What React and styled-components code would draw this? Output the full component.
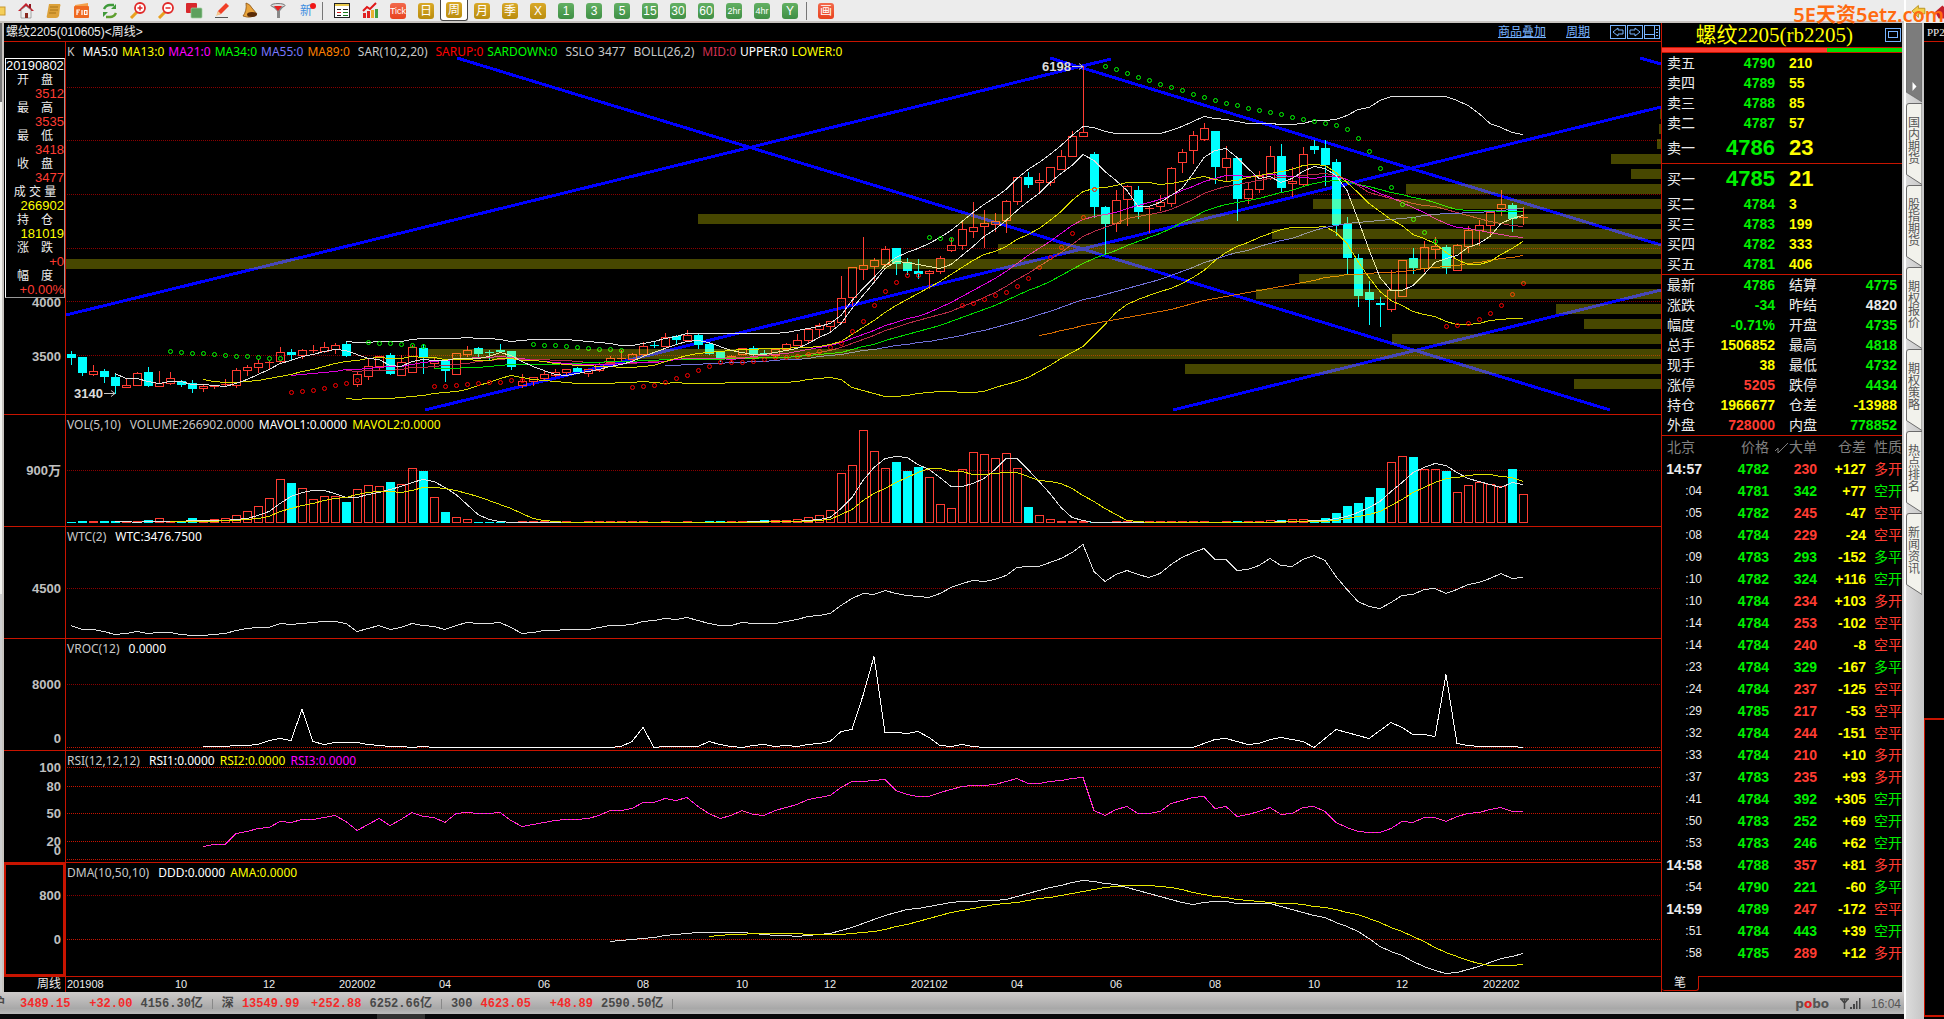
import React from 'react';
import styled, { createGlobalStyle, css } from 'styled-components';

const sans = '"Liberation Sans", "Noto Sans CJK SC", sans-serif';
const ui = '"Noto Sans", "Noto Sans CJK SC", sans-serif';
const mono = '"Liberation Mono", "Noto Sans CJK SC", monospace';
const c = {
  line: '#c81400',
  grid: '#8a0000',
  up: '#ff3c32',
  down: '#00ffff',
  green: '#00f000',
  yellow: '#ffff00',
  white: '#ececec',
  magenta: '#ff00ff',
  grey: '#c8c8c8',
};

const Global = createGlobalStyle`
  * { box-sizing: border-box; }
  body { margin: 0; background: #000; font-family: ${sans}; }
  button { font: inherit; padding: 0; margin: 0; border: 0; background: none; cursor: pointer; }
  table { border-collapse: collapse; border-spacing: 0; }
  td, th { padding: 0; font-weight: normal; text-align: left; }
  svg { display: block; }
`;

/* ---------- data ---------- */

// One entry per week: [falling?, high, body top, body bottom, low] on the price canvas.
const weeks = [
  [1,351,354,358,365],[1,357,357,373,376],[0,365,371,374,376],[1,369,371,377,383],[1,374,377,386,394],
  [0,378,385,387,387],[0,372,373,385,386],[1,367,372,386,387],[0,371,383,386,386],[0,372,378,383,385],
  [1,380,381,385,387],[1,380,383,389,393],[0,385,386,388,392],[0,385,386,386,389],[0,379,384,385,386],
  [0,368,370,385,388],[0,365,367,370,376],[0,359,363,367,373],[0,361,362,363,369],[0,347,352,361,363],
  [1,349,352,355,360],[0,349,350,355,359],[0,345,350,351,353],[0,342,347,351,353],[0,343,345,349,354],
  [1,341,344,356,357],[0,371,374,384,387],[0,359,366,376,380],[0,356,356,366,370],[1,353,355,374,375],
  [0,355,362,375,375],[0,345,347,372,372],[1,344,348,358,374],[0,357,360,363,368],[1,360,361,371,382],
  [0,353,353,374,375],[0,346,350,354,357],[1,347,348,354,357],[1,350,352,352,360],[1,344,350,352,352],
  [1,351,351,367,370],[0,374,381,385,388],[0,377,377,381,386],[0,370,374,378,380],[0,369,372,375,377],
  [0,369,369,372,376],[1,367,368,372,372],[0,369,369,373,377],[0,363,364,370,372],[0,356,358,362,364],
  [0,350,358,359,362],[0,353,354,359,361],[0,342,346,354,357],[1,342,345,345,348],[0,333,337,346,347],
  [1,335,336,340,344],[0,330,335,340,341],[1,334,335,345,349],[1,342,344,354,355],[1,352,352,358,362],
  [0,355,356,357,362],[0,348,348,354,355],[1,346,348,355,357],[1,350,353,354,356],[0,349,349,355,357],
  [0,343,344,349,350],[0,334,340,345,346],[0,329,329,340,343],[0,323,325,329,338],[0,321,321,326,331],
  [0,276,298,322,323],[0,267,267,297,306],[0,237,265,269,280],[0,258,260,266,282],[0,246,249,264,267],
  [1,248,248,264,275],[1,258,262,271,275],[1,259,271,274,279],[0,270,271,273,289],[0,256,258,271,274],
  [0,238,245,250,252],[0,221,229,245,250],[0,202,227,231,238],[0,210,223,226,248],[0,213,221,224,232],
  [0,200,201,220,233],[0,177,177,201,205],[1,172,177,185,188],[0,173,180,182,194],[0,167,167,182,186],
  [0,150,156,169,170],[0,131,136,156,157],[0,66,132,136,136],[1,152,154,207,218],[1,206,207,224,255],
  [0,190,200,223,232],[0,185,186,199,226],[1,186,190,212,219],[0,206,208,209,233],[0,195,202,206,211],
  [0,167,168,203,207],[0,149,152,162,173],[0,131,135,150,164],[0,123,128,139,141],[1,131,131,167,184],
  [0,146,158,167,182],[1,158,158,199,221],[0,182,189,198,204],[0,171,176,189,193],[0,146,156,178,180],
  [1,144,156,188,192],[0,167,181,183,197],[0,147,154,184,187],[1,140,146,150,154],[1,140,148,165,186],
  [1,159,162,225,236],[1,217,224,258,274],[1,254,258,296,307],[1,281,292,300,325],[1,297,303,305,327],
  [0,270,290,309,312],[0,260,260,296,297],[1,248,258,268,274],[0,241,247,268,272],[0,237,246,249,259],
  [1,245,247,268,274],[0,244,245,270,271],[0,226,230,246,253],[0,220,225,230,246],[0,212,212,225,236],
  [0,190,204,208,216],[1,203,205,219,232],[0,207,217,217,225],
];

const volumes = [
  1,2,1,2,2,1,1,3,4,1,2,5,2,3,4,7,11,16,24,43,40,34,23,26,26,21,33,37,36,41,38,54,52,25,11,5,3,1,1,1,
  1,1,1,1,1,1,1,1,1,1,1,1,1,1,1,1,1,1,2,2,1,1,2,3,2,2,3,5,7,12,49,57,92,71,54,61,52,56,45,18,14,53,70,
  68,64,69,54,16,7,3,1,1,1,1,1,1,1,1,1,1,1,1,1,1,1,1,2,1,1,2,3,3,3,2,5,10,17,20,26,35,60,66,66,53,53,52,
  30,37,40,38,36,54,28,
];

const sar = [
  ['up', 9, [351,352,353,353,354,355,356,356,357,358,358]],
  ['dn', 20, [392,391,390,388,385,383,380]],
  ['up', 27, [342,343,343,344,345,346]],
  ['dn', 33, [386,386,385,384,383,382,382,380,380]],
  ['up', 42, [344,345,345,346,347,348,349,349,350]],
  ['dn', 51, [387,386,385,382,378,375,370,366,362,362,362,361,359,357,357,356,354,351,347,343,331,321,305,291,282,275,275]],
  ['up', 78, [237,238,239]],
  ['dn', 81, [305,303,299,295,292,286,278,267,257,247,233,217,189]],
  ['up', 94, [66,69,73,77,80,84,87,90,94,97,100,103,105,108,110,112,114,117,119,121,123,125,129,138,151,168,187,204,219,232,241]],
  ['dn', 125, [326,325,323,319,313,305,294,283]],
];

const vroc = [
  746,746,746,745,745,744,740,738,740,709,741,744,742,742,742,744,745,746,746,747,746,747,747,747,747,747,
  747,747,747,747,747,747,747,747,747,747,747,747,746,741,727,747,746,746,746,746,741,744,746,747,745,744,
  746,745,746,744,743,741,731,729,695,656,732,732,733,731,737,745,746,744,746,747,747,747,747,747,747,747,
  747,747,747,747,747,747,747,747,747,747,747,747,747,743,739,738,741,744,743,739,737,739,741,747,738,729,
  732,735,738,730,722,727,734,734,736,674,743,745,746,746,746,746,747,
];

const rsi = [
  846,844,844,833,831,828,827,821,822,819,819,817,815,821,830,824,818,825,819,812,816,817,822,813,812,813,
  813,812,820,826,824,822,820,819,819,818,815,810,810,808,802,802,798,800,797,806,813,818,815,810,814,815,
  810,807,804,799,797,795,787,781,781,780,779,790,794,796,796,792,789,786,785,785,784,781,778,783,783,781,
  780,778,777,810,815,809,806,813,813,811,803,800,797,796,808,806,816,814,811,807,814,813,807,806,811,822,
  827,831,832,832,828,821,822,817,817,821,816,813,812,809,807,811,811,
];

const profile = [
  [109,1660],[124,1659],[139,1657],[154,1611],[169,1631],[184,1406],[199,1313],[214,698],[229,1272],[244,998],
  [259,66],[274,1299],[289,1256],[304,1556],[319,1584],[334,1392],[349,428],[364,1185],[379,1574],
];

const trends = [
  [66,315,1111,59],[457,58,1610,410],[425,410,1661,107],[1050,58,1661,245],[1173,410,1661,290],[1640,58,1661,64],
];

const X = (i) => 71 + 11 * i;
const close = weeks.map((w) => (w[0] ? w[3] : w[2]));
const average = (list, n) =>
  list.map((_, i) => (i < n - 1 ? null : list.slice(i - n + 1, i + 1).reduce((a, b) => a + b, 0) / n));
const spread = close.map((_, i) => {
  if (i < 25) return 0;
  const s = close.slice(i - 25, i + 1);
  const m = s.reduce((a, b) => a + b, 0) / 26;
  return Math.sqrt(s.reduce((a, b) => a + (b - m) * (b - m), 0) / 26);
});
const mid = average(close, 26);
const upper = mid.map((m, i) => (m === null ? null : m - 2 * spread[i]));
const lower = mid.map((m, i) => (m === null ? null : m + 2 * spread[i]));
const wtc = weeks.map((w, i) => 588 + ((w[1] + w[4] + 2 * close[i]) / 4 - 248) * 0.335);
const ma10 = average(close, 10);
const ma50 = average(close, 50);
const ddd = ma50.map((m, i) => (m === null ? null : 939 + 0.514 * (ma10[i] - m)));
const ama = ddd.map((_, i) =>
  i < 58 ? null : ddd.slice(i - 9, i + 1).reduce((a, b) => a + b, 0) / 10);
const volTop = volumes.map((v) => 523 - v);

/* ---------- layout ---------- */

const Shell = styled.div`
  display: grid;
  grid-template-columns: minmax(0, 1fr) 40px;
  min-height: 100vh;
  overflow: hidden;
`;
const Column = styled.div`
  display: flex;
  flex-direction: column;
  min-width: 0;
`;
const Toolbar = styled.header`
  display: flex;
  align-items: center;
  height: 23px;
  background: #ececec;
  border-bottom: 2px solid #c8c4c0;
`;
const ToolGroup = styled.div`
  display: flex;
`;
const ToolDivider = styled.span`
  width: 1px;
  height: 18px;
  margin: 0 5px 0 2px;
  background: #777;
`;
const Tool = styled.button`
  display: flex;
  align-items: center;
  justify-content: center;
  width: 28px;
  height: 21px;
  ${(p) => p.$active && css`
    border: 1px solid #444;
    border-top: 0;
    border-radius: 0 0 3px 3px;
    background: #fff;
  `}
`;
const Chip = styled.span`
  display: flex;
  align-items: center;
  justify-content: center;
  width: 16px;
  height: 16px;
  border-radius: 3px;
  color: #fff;
  font: 12px/16px "Liberation Sans", "Noto Sans CJK SC", sans-serif;
  font-size: ${(p) => (p.$small ? '9px' : '12px')};
  background: ${(p) => ({ gold: 'linear-gradient(#d9a928, #b98c0e)', green: 'linear-gradient(#63b063, #3f8f45)', red: 'linear-gradient(#f2694c, #e8431f)' })[p.$tone]};
`;
const NewMark = styled.span`
  position: relative;
  color: #3f8fe0;
  font: 12px/16px ${sans};
  &::after {
    content: '';
    position: absolute;
    top: 0;
    right: -4px;
    width: 6px;
    height: 6px;
    border-radius: 50%;
    background: #f01818;
  }
`;
const Body = styled.div`
  display: grid;
  grid-template-columns: 4px minmax(0, 1fr) 243px;
`;
const Edge = styled.div`
  border-right: 2px solid #c8c4c0;
  background: linear-gradient(#777 79px, #f2f2ee 79px, #f2f2ee 571px, #cfcfcf 571px);
`;
const ChartArea = styled.main`
  min-width: 0;
  background: #000;
`;
const ChartTitle = styled.div`
  display: flex;
  align-items: center;
  justify-content: space-between;
  height: 19px;
  padding: 0 1px 0 2px;
  border-bottom: 1px solid ${c.line};
  color: ${c.white};
  font: 12px/18px ${sans};
`;
const Heading = styled.h1`
  margin: 0;
  font: inherit;
`;
const TitleLinks = styled.nav`
  display: flex;
  align-items: center;
  gap: 20px;
`;
const TitleLink = styled.a`
  color: #78b4ff;
  text-decoration: underline;
`;
const IconRow = styled.div`
  display: flex;
  gap: 1px;
`;
const FrameButton = styled.button`
  width: 16px;
  height: 14px;
`;
const Pane = styled.section`
  display: grid;
  grid-template-columns: 61px minmax(0, 1fr);
  position: relative;
  border-bottom: 1px solid ${c.line};
`;
const Axis = styled.svg`
  width: 61px;
  ${(p) => p.$selected && css`box-shadow: inset 0 0 0 2px ${c.line};`}
`;
const Plot = styled.div`
  display: grid;
  min-width: 0;
  border-left: 1px solid ${c.line};
`;
const Canvas = styled.svg`
  grid-area: 1 / 1;
  width: 100%;
`;
const Legend = styled.div`
  grid-area: 1 / 1;
  align-self: start;
  display: flex;
  gap: ${(p) => (p.$main ? '4px' : '5px')};
  padding: 1px;
  font: 12px/17px ${ui};
  white-space: nowrap;
  z-index: 1;
`;
const LegendItem = styled.span`
  color: ${(p) => p.$color};
  margin-left: ${(p) => (p.$lead ? '4px' : 0)};
  margin-right: ${(p) => (p.$trail ? '4px' : 0)};
`;
const InfoBox = styled.dl`
  position: absolute;
  top: 16px;
  left: 1px;
  width: 60px;
  height: 240px;
  margin: 0;
  border: 1px solid #fff;
  border-right-color: #999;
  border-bottom-color: #999;
  background: #000;
  font: 13px/14px ${sans};
  color: #fff;
`;
const InfoDate = styled.dt`
  height: 14px;
`;
const InfoLabel = styled.dt`
  font-size: 12px;
  text-align: center;
  color: ${c.white};
`;
const InfoValue = styled.dd`
  margin: 0;
  text-align: right;
  color: ${(p) => p.$color};
`;
const DateRow = styled.div`
  display: grid;
  grid-template-columns: 61px minmax(0, 1fr);
  height: 15px;
  color: ${c.white};
  font: 12px/15px ${sans};
`;
const Period = styled.span`
  padding-right: 4px;
  text-align: right;
`;

/* ---------- quote panel ---------- */

const Quote = styled.aside`
  display: flex;
  flex-direction: column;
  border-left: 1px solid ${c.line};
  border-right: 2px solid #c8c8c8;
  background: #000;
  overflow: hidden;
`;
const QuoteHead = styled.div`
  display: flex;
  align-items: center;
  justify-content: flex-end;
  gap: 32px;
  height: 24px;
  padding-right: 1px;
`;
const Contract = styled.h2`
  margin: 0;
  color: ${c.yellow};
  font: 21px/24px "Liberation Serif", "Noto Sans CJK SC", serif;
`;
const Ratio = styled.div`
  height: 6px;
  border: solid ${c.line};
  border-width: 1px 0;
  background: linear-gradient(90deg, ${c.up} 165px, #00e000 165px);
`;
const Sheet = styled.table`
  width: 100%;
  table-layout: fixed;
  border-bottom: ${(p) => (p.$open ? 0 : '1px')} solid ${c.line};
`;
const Row = styled.tr`
  height: ${(p) => (p.$big ? '30px' : '20px')};
  line-height: 20px;
`;
const Label = styled.th`
  padding-left: ${(p) => (p.$second ? '14px' : '5px')};
  color: ${c.white};
  font-size: 14px;
  white-space: nowrap;
`;
const Num = styled.td`
  color: ${(p) => p.$color};
  font-size: ${(p) => (p.$big ? '22px' : '14px')};
  font-weight: bold;
  text-align: ${(p) => (p.$left ? 'left' : 'right')};
  padding-left: ${(p) => (p.$left ? '14px' : 0)};
  padding-right: ${(p) => (p.$end ? '5px' : 0)};
`;
const Trade = styled.tr`
  height: 22px;
  line-height: 22px;
  font-size: 14px;
`;
const HeadCell = styled.th`
  color: #808080;
  text-align: ${(p) => (p.$left ? 'left' : 'right')};
  padding-left: ${(p) => p.$pad || 0}px;
  white-space: nowrap;
`;
const Time = styled.td`
  text-align: right;
  color: ${c.white};
  font-size: ${(p) => (p.$full ? '14px' : '12px')};
  font-weight: ${(p) => (p.$full ? 'bold' : 'normal')};
`;
const Nature = styled.td`
  padding-left: 8px;
  color: ${(p) => p.$color};
  white-space: nowrap;
`;
const Tick = styled.svg`
  display: inline-block;
  vertical-align: -2px;
`;
const QuoteFoot = styled.div`
  display: flex;
  margin-top: auto;
  height: 16px;
`;
const FootTab = styled.button`
  width: 37px;
  height: 15px;
  border: 1px solid ${c.line};
  border-width: 0 1px 1px 0;
  border-radius: 0 0 3px 3px;
  color: ${c.white};
  font: 12px/14px ${sans};
`;
const FootRest = styled.div`
  flex: 1;
  border-top: 1px solid ${c.line};
`;

/* ---------- status bar ---------- */

const Status = styled.footer`
  display: flex;
  align-items: center;
  justify-content: space-between;
  height: 22px;
  padding: 2px 3px 0 0;
  background: linear-gradient(#cecbca, #a8a8a8 75%, #bcbcbc);
  overflow: hidden;
`;
const Indices = styled.div`
  display: flex;
  align-items: center;
  font: bold 12px/20px ${mono};
  color: #484848;
  white-space: nowrap;
`;
const Market = styled.div`
  display: flex;
  align-items: center;
  gap: 8px;
  padding: 0 9px;
  border-right: 1px solid #888;
  line-height: 10px;
  &:first-child { padding-left: 0; margin-left: -7px; gap: 8px; }
  &:first-child > :first-child { margin-right: 7px; }
`;
const Change = styled.span`
  color: #f52a2a;
  min-width: ${(p) => (p.$wide ? '54px' : 'auto')};
  text-align: right;
`;
const Tray = styled.div`
  display: flex;
  align-items: center;
  gap: 10px;
  color: #555;
  font: 12px/20px ${sans};
`;
const Brand = styled.strong`
  font: bold 12px/20px "DejaVu Sans", sans-serif;
  color: #555;
  em { color: #e02020; font-style: normal; }
`;
const TaskBar = styled.div`
  flex: 1;
  min-height: 5px;
  background: linear-gradient(90deg, #0a0a0c 377px, #333 377px, #333 425px, #0a0a0c 425px);
`;

/* ---------- right rail ---------- */

const RailTop = styled.div`
  display: flex;
  align-items: center;
  gap: 9px;
  height: 23px;
  padding-left: 5px;
  border-left: 2px solid #fff;
  background: #ececec;
  overflow: hidden;
`;
const RailBody = styled.div`
  display: grid;
  grid-template-columns: 20px 20px;
  flex: 1;
`;
const Tabs = styled.nav`
  display: flex;
  flex-direction: column;
  border-left: 2px solid #fff;
  border-right: 2px solid #c8c8c8;
  background: linear-gradient(90deg, #dcdcdc, #c8c8c8);
`;
const Tab = styled.button`
  display: grid;
  height: ${(p) => (p.$head ? '80px' : '82px')};
  justify-items: center;
`;
const TabShape = styled.svg`
  grid-area: 1 / 1;
`;
const TabText = styled.span`
  grid-area: 1 / 1;
  align-self: start;
  width: 12px;
  padding-top: 14px;
  color: #555;
  font: 12px/12px ${sans};
  word-break: break-all;
`;
const NextWindow = styled.div`
  display: flex;
  flex-direction: column;
  overflow: hidden;
`;
const NextTitle = styled.div`
  height: 19px;
  padding-left: 3px;
  border-bottom: 1px solid ${c.line};
  color: ${c.white};
  font: 11px/19px "Liberation Serif", serif;
`;
const NextPane = styled.div`
  flex: 1;
  margin: 676px 0 2px;
  border: solid ${c.line};
  border-width: 2px 0 2px 1px;
`;
const Watermark = styled.div`
  position: absolute;
  top: 3px;
  right: 0;
  color: #ff6a10;
  font: 600 20px/24px ${ui};
  white-space: nowrap;
`;

/* ---------- chart pieces ---------- */

const toPoints = (list, start = 0) =>
  list.map((y, i) => (y === null ? null : `${X(i + start)},${Math.round(y) + 0.5}`)).filter(Boolean).join(' ');

const Line = ({ values, color, start }) => (
  <polyline points={toPoints(values, start)} fill="none" stroke={color} strokeWidth="1" shapeRendering="crispEdges" />
);

const Grid = ({ ys, color = c.grid }) =>
  ys.map((y) => <line key={y} x1="67" x2="1661" y1={y + 0.5} y2={y + 0.5} stroke={color} strokeDasharray="1 1" />);

function ChartPane({ top, height, ticks, legend, main, selected, children, overlay }) {
  return (
    <Pane>
      <Axis $selected={selected} height={height} viewBox={`4 ${top} 61 ${height}`}>
        {ticks.map(([y, label]) => (
          <text key={label} x="61" y={y + 5} textAnchor="end" fill="#c0c0c0" fontSize="13" fontWeight="bold" fontFamily={sans}>{label}</text>
        ))}
      </Axis>
      <Plot>
        <Canvas height={height} viewBox={`66 ${top} 1595 ${height}`} preserveAspectRatio="none">{children}</Canvas>
        <Legend $main={main}>
          {legend.map(([text, color, lead]) => (
            <LegendItem key={text} $color={color} $lead={lead} $trail={text.endsWith(')')}>{text}</LegendItem>
          ))}
        </Legend>
      </Plot>
      {overlay}
    </Pane>
  );
}

const Candle = ({ i, w: [falling, high, top, bottom, low] }) => {
  const x = X(i);
  const color = falling ? c.down : c.up;
  return (
    <g fill={color} shapeRendering="crispEdges">
      <rect x={x} y={high} width="1" height={Math.max(top - high, 0)} />
      <rect x={x} y={bottom} width="1" height={Math.max(low - bottom, 0)} />
      {falling || bottom - top < 2
        ? <rect x={x - 4} y={top} width="9" height={Math.max(bottom - top, 1)} />
        : <rect x={x - 3.5} y={top + 0.5} width="8" height={bottom - top} fill="none" stroke={color} />}
    </g>
  );
};

const Arrow = ({ x, y }) => (
  <path d={`M${x} ${y}h11M${x + 7} ${y - 3}l4 3l-4 3`} stroke="#c8c8c8" fill="none" />
);

const PriceDrawing = () => (
  <>
    <Grid ys={[87, 140, 194, 248, 301, 355]} />
    {trends.map(([x1, y1, x2, y2]) => (
      <line key={`${x1}-${y1}`} x1={x1} y1={y1} x2={x2} y2={y2} stroke="#0000ff" strokeWidth="3" shapeRendering="crispEdges" />
    ))}
    {weeks.map((w, i) => <Candle key={i} i={i} w={w} />)}
    <Line values={upper} color="#e0e0e0" />
    <Line values={lower} color="#d8d800" />
    <Line values={mid} color="#b82c48" />
    <Line values={average(close, 89)} color="#d86c00" />
    <Line values={average(close, 55)} color="#7070d8" />
    <Line values={average(close, 34)} color="#00dc00" />
    <Line values={average(close, 21)} color="#dc00dc" />
    <Line values={average(close, 13)} color="#d8d800" />
    <Line values={average(close, 5)} color="#e0e0e0" />
    {sar.map(([side, start, ys]) => ys.map((y, i) => (
      <circle key={`${start}-${i}`} cx={X(start + i) + 0.5} cy={y + 0.5} r="2" fill="none" stroke={side === 'up' ? '#00ff00' : '#ff0000'} />
    )))}
    {profile.map(([y, x]) => (
      <rect key={y} x={x} y={y} width={1661 - x} height="10" fill="#ffff00" fillOpacity="0.28" shapeRendering="crispEdges" />
    ))}
    <g fill="#dcdcdc" fontSize="13" fontWeight="bold" fontFamily={sans}>
      <text x="1042" y="71">6198</text>
      <text x="74" y="398">3140</text>
    </g>
    <Arrow x={1072} y={66.5} />
    <Arrow x={104} y={393.5} />
  </>
);

const VolumeDrawing = () => (
  <>
    <Grid ys={[470]} />
    {volumes.map((v, i) => (weeks[i][0]
      ? <rect key={i} x={X(i) - 4} y={523 - v} width="9" height={v} fill={c.down} shapeRendering="crispEdges" />
      : <rect key={i} x={X(i) - 3.5} y={522.5 - v} width="8" height={v} fill="none" stroke={c.up} shapeRendering="crispEdges" />))}
    <Line values={average(volTop, 5)} color="#e0e0e0" />
    <Line values={average(volTop, 10)} color="#e0e000" />
  </>
);

/* ---------- icons ---------- */

const icons = {
  home: <><path d="M1 9l8-8 8 8z" fill="#c31f2b" /><path d="M12 2h2v4h-2z" fill="#8f1620" /><path d="M4 8l5-4 5 4v8H4z" fill="#eee" stroke="#777" strokeWidth=".6" /><path d="M8 11h3v5H8z" fill="#8a2a20" /></>,
  scroll: <><path d="M4 2h11q1 1 0 3l-1 9q-1 2-3 2H3q-2 0-1-3z" fill="#dca13a" /><path d="M5 5h8M5 8h8M4 11h7" stroke="#a87418" /></>,
  f10: <><rect x="1" y="4" width="15" height="12" rx="1" fill="#ef6a22" /><path d="M2 3l13-2v3H2z" fill="#f5a04a" /><path d="M4 13V8h3M4 10h2M9 13V8M11.500 8.500h2.500v4h-2.500z" stroke="#fff" fill="none" strokeWidth="1.200" /></>,
  refresh: <g fill="none" strokeWidth="2.500"><path d="M3 7q2-4 6-4h4" stroke="#3f9a3a" /><path d="M15 11q-2 4-6 4H5" stroke="#5f9f30" /><path d="M15 2v5h-5zM2 15v-5h5z" fill="#3f9a3a" /></g>,
  zoomIn: <><path d="M8 10l-6 6" stroke="#e8a020" strokeWidth="3" /><circle cx="11" cy="6" r="5" fill="#fff" stroke="#e02a2a" strokeWidth="1.800" /><path d="M8.500 6h5M11 3.500v5" stroke="#e02a2a" strokeWidth="1.500" /></>,
  zoomOut: <><path d="M8 10l-6 6" stroke="#e8a020" strokeWidth="3" /><circle cx="11" cy="6" r="5" fill="#fff" stroke="#e02a2a" strokeWidth="1.800" /><path d="M8.500 6h5" stroke="#e02a2a" strokeWidth="1.500" /></>,
  layers: <><rect x="1" y="1" width="11" height="10" rx="1" fill="#d8282c" /><rect x="6" y="6" width="11" height="10" rx="1" fill="#5da05d" stroke="#9fcf9f" strokeWidth=".7" /></>,
  pen: <><path d="M13 1l3 3-8 8-4 1 1-4z" fill="#f04028" /><path d="M5 9l3 3-5 2z" fill="#f4c890" /><path d="M2 15.500h13" stroke="#555" /></>,
  bell: <><path d="M5 1q4 1 6 5l5 6q-6 5-14 2 4-5 3-13z" fill="#e8a43c" stroke="#8a5010" strokeWidth=".8" /><ellipse cx="11" cy="12.500" rx="5" ry="2.500" fill="#5a2c08" /></>,
  funnel: <><path d="M2 3h14l-5 6v7H8V9z" fill="#888" /><ellipse cx="9" cy="3.500" rx="7" ry="2" fill="#ddd" stroke="#777" /><path d="M5 4h8l-4 5z" fill="#e82020" /></>,
  table: <><rect x="1.500" y="1.500" width="15" height="14" fill="#fff" stroke="#222" /><path d="M2 3h14" stroke="#e8c84c" strokeWidth="2" /><path d="M4 7.500h4M10 7.500h5M4 13.500h4" stroke="#222" /><path d="M4 10.500h4" stroke="#d01818" /><path d="M10 10.500h5M10 13.500h5" stroke="#187818" /></>,
  trend: <><path d="M2 16v-5h3v5zM6 16V9h3v7z" fill="#e02020" /><path d="M10 16V8h3v8z" fill="#e8b030" /><path d="M14 16V7h3v9z" fill="#40a040" /><path d="M2 9l4-4 3 2 6-6" stroke="#e01818" strokeWidth="2" fill="none" /></>,
};

const Icon = ({ name }) => <svg width="18" height="17" viewBox="0 0 18 17">{icons[name]}</svg>;

const leftTools = [['home', '首页'], ['scroll', '资讯'], ['f10', 'F10'], ['refresh', '刷新'], ['zoomIn', '放大'], ['zoomOut', '缩小'], ['layers', '叠加'], ['pen', '画线'], ['bell', '预警'], ['funnel', '筛选']];
const periods = [
  ['Tick', 'red'], ['日', 'gold'], ['周', 'gold'], ['月', 'gold'], ['季', 'gold'], ['X', 'gold'],
  ['1', 'green'], ['3', 'green'], ['5', 'green'], ['15', 'green'], ['30', 'green'], ['60', 'green'],
  ['2hr', 'green'], ['4hr', 'green'], ['Y', 'green'],
];

/* ---------- content ---------- */

const info = [
  ['开　盘', '3512', c.up], ['最　高', '3535', c.up], ['最　低', '3418', c.up], ['收　盘', '3477', c.up],
  ['成 交 量', '266902', c.yellow], ['持　仓', '181019', c.yellow], ['涨　跌', '+0', c.up], ['幅　度', '+0.00%', c.up],
];
const asks = [['卖五', 4790, 210], ['卖四', 4789, 55], ['卖三', 4788, 85], ['卖二', 4787, 57], ['卖一', 4786, 23]];
const bids = [['买一', 4785, 21], ['买二', 4784, 3], ['买三', 4783, 199], ['买四', 4782, 333], ['买五', 4781, 406]];
const stats = [
  ['最新', '4786', c.green, '结算', '4775', c.green],
  ['涨跌', '-34', c.green, '昨结', '4820', c.white],
  ['幅度', '-0.71%', c.green, '开盘', '4735', c.green],
  ['总手', '1506852', c.yellow, '最高', '4818', c.green],
  ['现手', '38', c.yellow, '最低', '4732', c.green],
  ['涨停', '5205', c.up, '跌停', '4434', c.green],
  ['持仓', '1966677', c.yellow, '仓差', '-13988', c.yellow],
  ['外盘', '728000', c.up, '内盘', '778852', c.green],
];
const trades = [
  ['14:57', 4782, 230, '+127', '多开', 1], [':04', 4781, 342, '+77', '空开', 0], [':05', 4782, 245, '-47', '空平', 1],
  [':08', 4784, 229, '-24', '空平', 1], [':09', 4783, 293, '-152', '多平', 0], [':10', 4782, 324, '+116', '空开', 0],
  [':10', 4784, 234, '+103', '多开', 1], [':14', 4784, 253, '-102', '空平', 1], [':14', 4784, 240, '-8', '空平', 1],
  [':23', 4784, 329, '-167', '多平', 0], [':24', 4784, 237, '-125', '空平', 1], [':29', 4785, 217, '-53', '空平', 1],
  [':32', 4784, 244, '-151', '空平', 1], [':33', 4784, 210, '+10', '多开', 1], [':37', 4783, 235, '+93', '多开', 1],
  [':41', 4784, 392, '+305', '空开', 0], [':50', 4783, 252, '+69', '空开', 0], [':53', 4783, 246, '+62', '空开', 0],
  ['14:58', 4788, 357, '+81', '多开', 1], [':54', 4790, 221, '-60', '多平', 0], ['14:59', 4789, 247, '-172', '空平', 1],
  [':51', 4784, 443, '+39', '空开', 0], [':58', 4785, 289, '+12', '多开', 1],
];
const dates = [
  [67, '201908'], [175, '10'], [263, '12'], [339, '202002'], [439, '04'], [538, '06'], [637, '08'], [736, '10'],
  [824, '12'], [911, '202102'], [1011, '04'], [1110, '06'], [1209, '08'], [1308, '10'], [1396, '12'], [1483, '202202'],
];

const Depth = ({ rows, best }) => (
  <Sheet>
    <colgroup><col style={{ width: 45 }} /><col style={{ width: 68 }} /><col /></colgroup>
    <tbody>
      {rows.map(([label, price, lots]) => (
        <Row key={label} $big={label === best}>
          <Label scope="row">{label}</Label>
          <Num $color={c.green} $big={label === best}>{price}</Num>
          <Num $color={c.yellow} $big={label === best} $left>{lots}</Num>
        </Row>
      ))}
    </tbody>
  </Sheet>
);

const SideTab = ({ text }) => (
  <Tab>
    <TabShape width="16" height="82" viewBox="0 0 16 82">
      <path d="M16 .5H3Q.5 .5 .5 3V71.500L16 81.500z" fill="#f2f2ec" stroke="#6a6a6a" />
    </TabShape>
    <TabText>{text}</TabText>
  </Tab>
);

export default function App() {
  return (
    <>
      <Global />
      <Shell>
        <Column>
          <Toolbar>
            <svg width="12" height="17" viewBox="0 0 12 17"><rect x="-3" y="5" width="8" height="8" fill="#f5cf5a" stroke="#c8982c" /></svg>
            <ToolGroup>
              {leftTools.map(([name, label]) => <Tool key={name} aria-label={label}><Icon name={name} /></Tool>)}
              <Tool><NewMark>新</NewMark></Tool>
            </ToolGroup>
            <ToolDivider />
            <ToolGroup>
              <Tool aria-label="报价"><Icon name="table" /></Tool>
              <Tool aria-label="走势"><Icon name="trend" /></Tool>
              {periods.map(([label, tone]) => (
                <Tool key={label} $active={label === '周'}>
                  <Chip $tone={tone} $small={label.length > 2}>{label}</Chip>
                </Tool>
              ))}
            </ToolGroup>
            <ToolDivider />
            <Tool><Chip $tone="red">画</Chip></Tool>
          </Toolbar>

          <Body>
            <Edge />
            <ChartArea>
              <ChartTitle>
                <Heading>螺纹2205(010605)&lt;周线&gt;</Heading>
                <TitleLinks>
                  <TitleLink href="#overlay">商品叠加</TitleLink>
                  <TitleLink href="#period">周期</TitleLink>
                  <IconRow>
                    {['M13 5H8V3L3 7l5 4V9h5z', 'M3 5h5V3l5 4-5 4V9H3z', 'M1 9.500h9M10.500 1v12M12 4.500h2M12 7.500h2M12 10.500h2'].map((d, i) => (
                      <FrameButton key={d} aria-label={['上一个', '下一个', '布局'][i]}>
                        <svg width="16" height="14" viewBox="0 0 16 14" fill="none" stroke="#78b4ff"><rect x=".5" y=".5" width="15" height="13" /><path d={d} /></svg>
                      </FrameButton>
                    ))}
                  </IconRow>
                </TitleLinks>
              </ChartTitle>

              <ChartPane
                main top={42} height={372} ticks={[[302, '4000'], [356, '3500']]}
                legend={[
                  ['K', c.grey], ['MA5:0', '#fff', 1], ['MA13:0', c.yellow], ['MA21:0', c.magenta], ['MA34:0', '#00ff00'],
                  ['MA55:0', '#7878ff'], ['MA89:0', '#ff8000'], ['SAR(10,2,20)', c.grey, 1], ['SARUP:0', '#ff0000'],
                  ['SARDOWN:0', '#00ff00'], ['SSLO', c.grey, 1], ['3477', c.grey], ['BOLL(26,2)', c.grey, 1],
                  ['MID:0', '#d03050'], ['UPPER:0', '#fff'], ['LOWER:0', c.yellow],
                ]}
                overlay={
                  <InfoBox>
                    <InfoDate>20190802</InfoDate>
                    {info.map(([label, value, color]) => (
                      <React.Fragment key={label}>
                        <InfoLabel>{label}</InfoLabel>
                        <InfoValue $color={color}>{value}</InfoValue>
                      </React.Fragment>
                    ))}
                  </InfoBox>
                }
              >
                <PriceDrawing />
              </ChartPane>

              <ChartPane top={415} height={111} ticks={[[470, '900万']]}
                legend={[['VOL(5,10)', c.grey], ['VOLUME:266902.0000', c.grey], ['MAVOL1:0.0000', '#fff'], ['MAVOL2:0.0000', c.yellow]]}>
                <VolumeDrawing />
              </ChartPane>

              <ChartPane top={527} height={111} ticks={[[588, '4500']]} legend={[['WTC(2)', c.grey], ['WTC:3476.7500', '#fff']]}>
                <Grid ys={[588]} />
                <Line values={wtc} color="#e0e0e0" />
              </ChartPane>

              <ChartPane top={639} height={111} ticks={[[684, '8000'], [738, '0']]} legend={[['VROC(12)', c.grey], ['0.0000', '#fff']]}>
                <Grid ys={[684]} />
                <Grid ys={[747]} color={c.line} />
                <Line values={vroc} start={12} color="#fff" />
              </ChartPane>

              <ChartPane top={751} height={111} ticks={[[767, '100'], [786, '80'], [813, '50'], [841, '20'], [850, '0']]}
                legend={[['RSI(12,12,12)', c.grey], ['RSI1:0.0000', '#fff'], ['RSI2:0.0000', c.yellow], ['RSI3:0.0000', c.magenta]]}>
                <Grid ys={[767, 786, 813, 841, 859]} color={c.line} />
                <Line values={rsi} start={12} color="#ff00ff" />
                <polyline points={toPoints(rsi, 12)} fill="none" stroke="#ff6090" strokeDasharray="2 2" shapeRendering="crispEdges" />
              </ChartPane>

              <ChartPane selected top={863} height={113} ticks={[[895, '800'], [939, '0']]}
                legend={[['DMA(10,50,10)', c.grey], ['DDD:0.0000', '#fff'], ['AMA:0.0000', c.yellow]]}>
                <Grid ys={[895]} />
                <Grid ys={[939]} color={c.line} />
                <Line values={ddd} color="#e0e0e0" />
                <Line values={ama} color="#e8e800" />
              </ChartPane>

              <DateRow>
                <Period>周线</Period>
                <Plot>
                  <Canvas height="15" viewBox="66 977 1595 15" preserveAspectRatio="none">
                    {dates.map(([x, label]) => (
                      <text key={x} x={x} y="988" fill={c.white} fontSize="11" fontFamily={sans}>{label}</text>
                    ))}
                  </Canvas>
                </Plot>
              </DateRow>
            </ChartArea>

            <Quote>
              <QuoteHead>
                <Contract>螺纹2205(rb2205)</Contract>
                <FrameButton aria-label="窗口">
                  <svg width="16" height="14" viewBox="0 0 16 14" fill="none" stroke="#78b4ff"><rect x=".5" y=".5" width="15" height="13" /><rect x="3.500" y="3.500" width="9" height="6" /></svg>
                </FrameButton>
              </QuoteHead>
              <Ratio />
              <Depth rows={asks} best="卖一" />
              <Depth rows={bids} best="买一" />
              <Sheet>
                <colgroup><col style={{ width: 45 }} /><col style={{ width: 68 }} /><col style={{ width: 54 }} /><col /></colgroup>
                <tbody>
                  {stats.map(([a, av, ac, b, bv, bc]) => (
                    <Row key={a}>
                      <Label scope="row">{a}</Label>
                      <Num $color={ac}>{av}</Num>
                      <Label $second>{b}</Label>
                      <Num $color={bc} $end>{bv}</Num>
                    </Row>
                  ))}
                </tbody>
              </Sheet>
              <Sheet $open>
                <colgroup>
                  <col style={{ width: 40 }} /><col style={{ width: 67 }} /><col style={{ width: 48 }} /><col style={{ width: 49 }} /><col />
                </colgroup>
                <thead>
                  <Trade>
                    <HeadCell $left $pad={5}>北京</HeadCell>
                    <HeadCell>价格</HeadCell>
                    <HeadCell>
                      <Tick width="14" height="12" viewBox="0 0 14 12" fill="none" stroke="#808080"><path d="M0 9l3-3v5L13 1" /></Tick>大单
                    </HeadCell>
                    <HeadCell>仓差</HeadCell>
                    <HeadCell $left $pad={8}>性质</HeadCell>
                  </Trade>
                </thead>
                <tbody>
                  {trades.map(([time, price, lots, diff, nature, buy], i) => (
                    <Trade key={i}>
                      <Time $full={time.length > 3}>{time}</Time>
                      <Num $color={c.green}>{price}</Num>
                      <Num $color={buy ? c.up : c.green}>{lots}</Num>
                      <Num $color={c.yellow}>{diff}</Num>
                      <Nature $color={buy ? c.up : c.green}>{nature}</Nature>
                    </Trade>
                  ))}
                </tbody>
              </Sheet>
              <QuoteFoot>
                <FootTab>笔</FootTab>
                <FootRest />
              </QuoteFoot>
            </Quote>
          </Body>

          <Status>
            <Indices>
              <Market><span>沪</span><Change>3489.15</Change><Change $wide>+32.00</Change><span>4156.30亿</span></Market>
              <Market><span>深</span><Change>13549.99</Change><Change $wide>+252.88</Change><span>6252.66亿</span></Market>
              <Market><span>300</span><Change>4623.05</Change><Change $wide>+48.89</Change><span>2590.50亿</span></Market>
            </Indices>
            <Tray>
              <Brand>p<em>o</em>bo</Brand>
              <svg width="22" height="12" viewBox="0 0 22 12"><path d="M1 1h9M2 1l3.500 4L9 1M5.500 1v10" stroke="#444" strokeWidth="1.500" fill="none" /><path d="M11 9h2v2h-2zM14 6h2v5h-2zM17 3h1.500v8H17zM20 0h1.500v11H20z" fill="#444" /></svg>
              <time>16:04</time>
            </Tray>
          </Status>
          <TaskBar />
        </Column>

        <Column>
          <RailTop>
            <svg width="16" height="15" viewBox="0 0 16 15"><path d="M1 7l7-6v3h7v6H8v4z" fill="#f2d04a" stroke="#b8901c" /></svg>
            <svg width="10" height="15" viewBox="0 0 10 15"><path d="M0 8l8-7 8 7v7H4z" fill="#c31f2b" /></svg>
          </RailTop>
          <RailBody>
            <Tabs>
              <Tab $head aria-label="展开">
                <TabShape width="16" height="80" viewBox="0 0 16 80">
                  <path d="M0 0h16v79L0 69z" fill="#7c7c7c" stroke="#555" strokeWidth=".5" />
                  <path d="M6.500 59l4 4.500-4 4.500z" fill="#fff" />
                </TabShape>
              </Tab>
              {['国内期货', '股指期货', '期权报价', '期权策略', '热点排名', '新闻资讯'].map((t) => <SideTab key={t} text={t} />)}
            </Tabs>
            <NextWindow>
              <NextTitle>PP2</NextTitle>
              <NextPane />
            </NextWindow>
          </RailBody>
        </Column>
        <Watermark>5E天资5etz.com</Watermark>
      </Shell>
    </>
  );
}
